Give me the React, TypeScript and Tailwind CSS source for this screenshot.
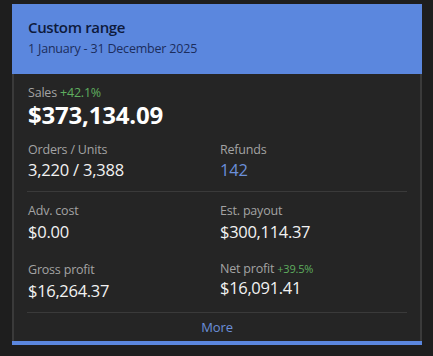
export default function App() {
  const font = { fontFamily: '"Open Sans", "Liberation Sans", sans-serif' };
  return (
    <div className="min-h-screen w-[433px] h-[356px] bg-[#1e1e1e] pt-[4px] px-[12px]" style={font}>
      <div className="w-[410px]">
        {/* Header */}
        <div className="bg-[#5b87de] px-[16px] pt-[13px] pb-[17px]">
          <p className="text-[15px] leading-[20px] font-semibold tracking-[-0.35px] text-[#0e1a3c]">Custom range</p>
          <p className="mt-[4px] text-[12.5px] leading-[16px] tracking-[-0.2px] text-[#1c2d5c]">1 January - 31 December 2025</p>
        </div>

        {/* Body */}
        <div className="bg-[#252525] border-x-2 border-[#3a3a3a] px-[13px]">
          <div className="pt-[10px] px-[1px]">
            <p className="text-[12.5px] leading-[17px] tracking-[-0.2px] text-[#a3a3a3]">
              Sales <span className="text-[#5fae5f]">+42.1%</span>
            </p>
            <p className="text-[24px] leading-[28px] font-bold tracking-[-0.2px] text-white">$373,134.09</p>
          </div>

          <div className="grid grid-cols-[192px_1fr] mt-[12px] px-[1px]">
            <div>
              <p className="text-[12.5px] leading-[18px] tracking-[-0.2px] text-[#a3a3a3]">Orders / Units</p>
              <p className="text-[16.5px] leading-[22px] tracking-[-0.2px] text-[#f2f2f2]">3,220 / 3,388</p>
            </div>
            <div>
              <p className="text-[12.5px] leading-[18px] tracking-[-0.2px] text-[#a3a3a3]">Refunds</p>
              <p className="text-[16.5px] leading-[22px] tracking-[-0.2px] text-[#6b8fd9]">142</p>
            </div>
          </div>

          <div className="mt-[10px] h-px bg-[#3a3a3a]" />

          <div className="grid grid-cols-[192px_1fr] pt-[10px] px-[1px]">
            <div>
              <p className="text-[12.5px] leading-[18px] tracking-[-0.2px] text-[#a3a3a3]">Adv. cost</p>
              <p className="mt-[1px] text-[16.5px] leading-[22px] tracking-[-0.2px] text-[#f2f2f2]">$0.00</p>
            </div>
            <div>
              <p className="text-[12.5px] leading-[18px] tracking-[-0.2px] text-[#a3a3a3]">Est. payout</p>
              <p className="mt-[1px] text-[16.5px] leading-[22px] tracking-[-0.3px] text-[#f2f2f2]">$300,114.37</p>
            </div>
          </div>

          <div className="grid grid-cols-[192px_1fr] mt-[18px] px-[1px]">
            <div>
              <p className="text-[12.5px] leading-[18px] tracking-[-0.2px] text-[#a3a3a3]">Gross profit</p>
              <p className="mt-[1px] text-[16.5px] leading-[22px] tracking-[-0.3px] text-[#f2f2f2]">$16,264.37</p>
            </div>
            <div className="-mt-[1px]">
              <p className="text-[12.5px] leading-[18px] tracking-[-0.2px] text-[#a3a3a3]">
                Net profit <span className="text-[11px] text-[#5fae5f]">+39.5%</span>
              </p>
              <p className="-mt-[1px] text-[16.5px] leading-[22px] tracking-[-0.3px] text-[#f2f2f2]">$16,091.41</p>
            </div>
          </div>

          <div className="mt-[10px] h-px bg-[#3a3a3a]" />

          <p className="pt-[5px] pb-[5px] text-center text-[13px] leading-[18px] tracking-[-0.1px] text-[#6b8fd9]">More</p>
        </div>

        <div className="h-[4px] bg-[#5b87de]" />
      </div>
    </div>
  );
}
